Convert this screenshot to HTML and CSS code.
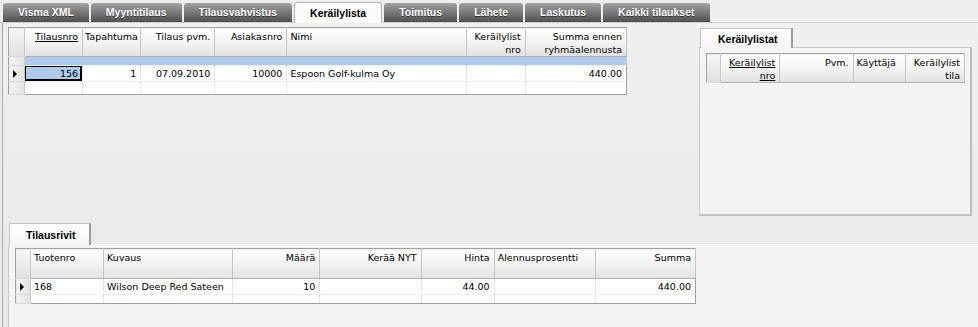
FILE: index.html
```html
<!DOCTYPE html>
<html lang="fi">

<head>
    <meta charset="UTF-8">
    <title>Keräilylista</title>
    <link rel="stylesheet" href="styles.css">
</head>

<body>
    <!-- päävälilehdet -->
    <div class="tabs">
        <div class="tab">Visma XML</div>
        <div class="tab">Myyntitilaus</div>
        <div class="tab">Tilausvahvistus</div>
        <div class="tab active">Keräilylista</div>
        <div class="tab">Toimitus</div>
        <div class="tab">Lähete</div>
        <div class="tab">Laskutus</div>
        <div class="tab">Kaikki tilaukset</div>
    </div>

    <div class="main">
        <div class="upper">
            <!-- tilaukset -->
            <table class="grid orders">
                <colgroup>
                    <col style="width:16px">
                    <col style="width:58px">
                    <col style="width:58px">
                    <col style="width:74px">
                    <col style="width:72px">
                    <col style="width:179px">
                    <col style="width:59px">
                    <col style="width:101px">
                </colgroup>
                <tr class="head">
                    <th class="rh"></th>
                    <th class="r"><u>Tilausnro</u></th>
                    <th class="tight">Tapahtuma</th>
                    <th class="r">Tilaus pvm.</th>
                    <th class="r">Asiakasnro</th>
                    <th>Nimi</th>
                    <th class="r">Keräilylist nro</th>
                    <th class="r">Summa ennen ryhmäalennusta</th>
                </tr>
                <tr class="blue">
                    <td class="rh"></td>
                    <td></td><td></td><td></td><td></td><td></td><td></td><td></td>
                </tr>
                <tr class="row">
                    <td class="rh"><span class="arrow"></span></td>
                    <td class="r focus">156</td>
                    <td class="r">1</td>
                    <td class="r">07.09.2010</td>
                    <td class="r">10000</td>
                    <td>Espoon Golf-kulma Oy</td>
                    <td></td>
                    <td class="r">440.00</td>
                </tr>
                <tr class="empty">
                    <td class="rh"></td>
                    <td></td><td></td><td></td><td></td><td></td><td></td><td></td>
                </tr>
            </table>

            <!-- keräilylistat -->
            <div class="side">
                <div class="ptab">Keräilylistat</div>
                <div class="panel side-panel">
                    <table class="grid lists">
                        <colgroup>
                            <col style="width:14px">
                            <col style="width:59px">
                            <col style="width:73px">
                            <col style="width:52px">
                            <col style="width:59px">
                        </colgroup>
                        <tr class="head">
                            <th class="rh"></th>
                            <th class="r"><u>Keräilylist nro</u></th>
                            <th class="r">Pvm.</th>
                            <th>Käyttäjä</th>
                            <th class="r">Keräilylist tila</th>
                        </tr>
                    </table>
                </div>
            </div>
        </div>

        <!-- tilausrivit -->
        <div class="lower">
            <div class="ptab">Tilausrivit</div>
            <div class="panel lower-panel">
                <table class="grid rows">
                    <colgroup>
                        <col style="width:15px">
                        <col style="width:73px">
                        <col style="width:129px">
                        <col style="width:87px">
                        <col style="width:101px">
                        <col style="width:73px">
                        <col style="width:101px">
                        <col style="width:100px">
                    </colgroup>
                    <tr class="head">
                        <th class="rh"></th>
                        <th>Tuotenro</th>
                        <th>Kuvaus</th>
                        <th class="r">Määrä</th>
                        <th class="r">Kerää NYT</th>
                        <th class="r">Hinta</th>
                        <th>Alennusprosentti</th>
                        <th class="r">Summa</th>
                    </tr>
                    <tr class="row">
                        <td class="rh"><span class="arrow"></span></td>
                        <td>168</td>
                        <td>Wilson Deep Red Sateen</td>
                        <td class="r">10</td>
                        <td></td>
                        <td class="r">44.00</td>
                        <td></td>
                        <td class="r">440.00</td>
                    </tr>
                    <tr class="empty short">
                        <td class="rh"></td>
                        <td></td><td></td><td></td><td></td><td></td><td></td><td></td>
                    </tr>
                </table>
            </div>
        </div>
    </div>
</body>

</html>
```

FILE: styles.css
```css
body {
    margin: 0;
    padding: 0;
    height: 327px;
    overflow: hidden;
    background-color: #ebebeb;
    font-family: "DejaVu Sans", Verdana, sans-serif;
    font-size: 9.5px;
    color: #000;
}

/* välilehdet */
.tabs {
    display: flex;
    align-items: flex-end;
    gap: 2px;
    height: 23px;
    padding-left: 3px;
    box-sizing: border-box;
    background-color: #eeeeee;
    border-bottom: 1px solid #d0d0d0;
}

.tab {
    height: 19px;
    line-height: 19px;
    padding: 0 15px;
    border-radius: 3px 3px 0 0;
    background: linear-gradient(#a2a2a2, #7c7c7c 45%, #505050);
    color: #fff;
    font-family: "Liberation Sans", Arial, sans-serif;
    font-weight: bold;
    font-size: 10.5px;
    text-shadow: 0 1px 0 #333;
}

.tab.active {
    height: 21px;
    line-height: 20px;
    margin-bottom: -1px;
    background: #fbfbfb;
    color: #000;
    text-shadow: none;
    border: 1px solid #b4b4b4;
    border-bottom: none;
    box-sizing: border-box;
}

.main {
    display: flex;
    flex-direction: column;
    height: 304px;
    margin-left: 2px;
    border-left: 1px solid #a8a8a8;
    background: linear-gradient(#f0f0f0, #e8e8e8);
}

.upper {
    display: flex;
    align-items: flex-start;
    padding: 4px 6px 0 5px;
}

/* taulukot */
.grid {
    border-collapse: collapse;
    table-layout: fixed;
    border: 1px solid #a0a0a0;
    background-color: #fff;
}

.grid th {
    padding: 2px 4px 0 3px;
    height: 26px;
    vertical-align: top;
    text-align: left;
    font-weight: normal;
    line-height: 13px;
    background: linear-gradient(#ffffff, #f3f3f3 50%, #e2e2e2);
    border-right: 1px solid #c4c4c4;
    border-bottom: 1px solid #b0b0b0;
    overflow: hidden;
}

.grid th.tight {
    padding-left: 2px;
    padding-right: 0;
    white-space: nowrap;
}

.grid td {
    padding: 0 4px 0 3px;
    white-space: nowrap;
    overflow: hidden;
    border-right: 1px dotted #d4d4d4;
    border-bottom: 1px dotted #e2e2e2;
}

.grid .r {
    text-align: right;
}

.grid .rh {
    padding: 0;
    background: linear-gradient(90deg, #f3f3f3, #e2e2e2);
    border-right: 1px solid #c8c8c8;
    border-bottom: 1px solid #d8d8d8;
}

.grid th.rh {
    background: linear-gradient(#f6f6f6, #e0e0e0);
}

.grid .blue td {
    height: 8px;
    background-color: #aecbee;
    border-right: 1px solid #aecbee;
}

.grid .blue td.rh {
    background: linear-gradient(90deg, #f3f3f3, #e2e2e2);
    border-right: 1px solid #c8c8c8;
}

.grid .row td {
    height: 15px;
    line-height: 15px;
}

.grid .empty td {
    height: 12px;
}

.grid .empty.short td {
    height: 8px;
}

.grid td.focus {
    background-color: #aecbee;
    box-shadow: inset 0 0 0 1px #000, inset -1px -1px 0 1px #000;
}

.arrow {
    display: block;
    width: 0;
    height: 0;
    margin-left: 4px;
    border-left: 4px solid #000;
    border-top: 4px solid transparent;
    border-bottom: 4px solid transparent;
}

.orders {
    width: 619px;
}

/* sivupaneelit */
.ptab {
    display: inline-block;
    height: 20px;
    line-height: 21px;
    padding: 0 18px;
    box-sizing: border-box;
    background: linear-gradient(#ffffff, #f6f6f6);
    border: 1px solid #c4c4c4;
    border-right: 2px solid #9c9c9c;
    border-bottom: none;
    font-family: "Liberation Sans", Arial, sans-serif;
    font-weight: bold;
    font-size: 10.5px;
    position: relative;
    z-index: 1;
    margin-bottom: -1px;
}

.panel {
    background-color: #f4f4f4;
    border: 1px solid #c8c8c8;
}

.side {
    margin-left: auto;
    margin-top: 1px;
    width: 273px;
}

.side .ptab {
    width: 93px;
    margin-left: 1px;
    padding: 0 0 0 17px;
}

.side-panel {
    padding: 5px 6px 0;
    border-right: 2px solid #bcbcbc;
    border-bottom: 2px solid #c2c2c2;
    box-sizing: border-box;
    height: 169px;
}

.lists {
    width: 259px;
}

.lists th {
    height: 25px;
}

.lower {
    flex: 1;
    display: flex;
    flex-direction: column;
    margin-top: 7px;
    padding-left: 5px;
}

.lower .ptab {
    align-self: flex-start;
    width: 82px;
    height: 22px;
    line-height: 23px;
    margin-left: 1px;
    padding: 0 0 0 16px;
}

.lower-panel {
    flex: 1;
    padding: 3px 6px 0;
    border-right: none;
    border-bottom: none;
    border-top-color: #fdfdfd;
}

.rows {
    width: 681px;
}

.rows th {
    height: 27px;
}
```
